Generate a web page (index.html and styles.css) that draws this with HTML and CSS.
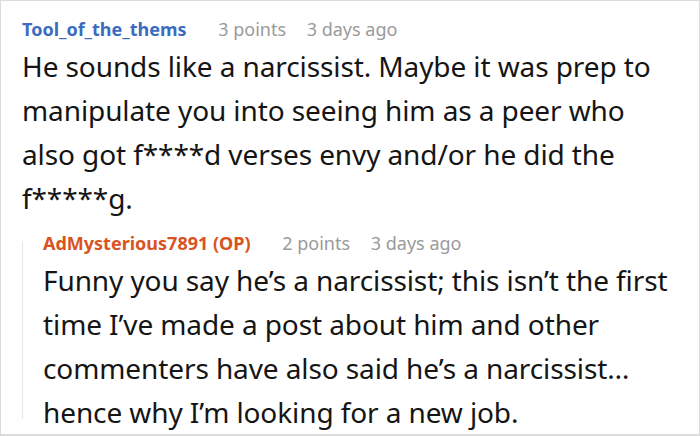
FILE: index.html
```html
<!DOCTYPE html>
<html>
<head>
<meta charset="utf-8">
<link rel="stylesheet" href="styles.css">
</head>
<body>
<div class="frame">
  <div class="comment">
    <div class="meta">
      <span class="user user-blue">Tool_of_the_thems</span>
      <span class="info first">3 points</span>
      <span class="info">3 days ago</span>
    </div>
    <p class="text">He sounds like a narcissist. Maybe it was prep to manipulate you into seeing him as a peer who also got f****d verses envy and/or he did the f*****g.</p>
    <div class="reply">
      <div class="rail"></div>
      <div class="reply-body">
        <div class="meta">
          <span class="user user-orange">AdMysterious7891 (OP)</span>
          <span class="info first">2 points</span>
          <span class="info">3 days ago</span>
        </div>
        <p class="text">Funny you say he’s a narcissist; this isn’t the first time I’ve made a post about him and other commenters have also said he’s a narcissist… hence why I’m looking for a new job.</p>
      </div>
    </div>
  </div>
</div>
</body>
</html>
```

FILE: styles.css
```css
html, body {
  margin: 0;
  padding: 0;
  background: #ffffff;
}
.frame {
  box-sizing: border-box;
  width: 700px;
  height: 436px;
  border: 1px solid #dcdcdc;
  border-bottom-width: 2px;
  background: #ffffff;
  font-family: "Noto Sans", "Open Sans", sans-serif;
  overflow: hidden;
}
.comment {
  padding: 16px 20px 0 21px;
}
.meta {
  font-size: 18px;
  line-height: 24px;
  white-space: nowrap;
}
.user {
  font-weight: 700;
  margin-right: 11px;
}
.user-blue { color: #3b6cbf; }
.user-orange { color: #d8541f; }
.info {
  color: #9a9a9a;
  margin-left: 16px;
}
.text {
  margin: 3px 0 0 0;
  font-size: 28px;
  line-height: 44px;
  letter-spacing: -0.1px;
  color: #151515;
}
.reply {
  display: flex;
  margin-top: 11px;
}
.rail {
  width: 1px;
  background: #e6e6e6;
  margin-top: 10px;
  margin-bottom: 15px;
  flex: none;
}
.reply-body {
  padding-left: 20px;
}
```
